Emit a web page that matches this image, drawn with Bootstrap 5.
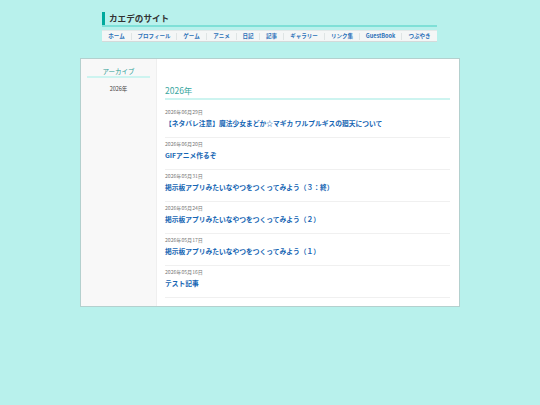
<!DOCTYPE html>
<html lang="ja">
<head>
<meta charset="utf-8">
<title>カエデのサイト</title>
<link href="https://cdn.jsdelivr.net/npm/bootstrap@5.3.0/dist/css/bootstrap.min.css" rel="stylesheet">
<style>
html,body{height:405px;overflow:hidden}
body{background:#b8f1ec;font-family:"Noto Sans CJK JP","Noto Sans",sans-serif;font-size:6px;color:#333}
.site-wrap{width:380px;margin:0 auto;padding-top:12px}
.site-head{width:335px;margin:0 0 0 22px}
.site-title{margin:0;font-size:8.6px;font-weight:700;line-height:13px;color:#333;border-left:3px solid #00a99d;padding-left:4px}
.title-rule{height:2px;background:#7ee0d7}
.site-nav{margin-top:3px;height:12px;background:#f4f6f6;border-top:1px solid #e2e8e8;border-bottom:1px solid #d4dada;align-items:center}
.site-nav a{display:block;flex:0 0 auto;text-align:center;font-size:5.5px;line-height:7px;font-weight:700;color:#2a70b8;text-decoration:none;border-right:1px solid #dfe4e4}
.site-nav a:last-child{border-right:0}
.w1{width:30px}.w2{width:45px}.w3{width:30px}.w4{width:30px}.w5{width:23px}.w6{width:24px}.w7{width:41px}.w8{width:35px}.w9{width:42px}.w10{width:35px}
.main-box{margin-top:16px;height:249px;background:#fff;border:1px solid #b4d0ce}
.side-col{width:76px;background:#f8f8f8;border-right:1px solid #efefef;padding:8px 6px 0}
.side-head{font-size:6.5px;line-height:9px;text-align:center;color:#2b9c94;border-bottom:2px solid #cdf4f0;margin-bottom:7px}
.side-item{font-size:5.5px;line-height:8px;text-align:center;color:#444}
.body-col{padding:24.5px 9px 0 8px}
.year-head{margin:0 0 6.5px;font-size:8.5px;font-weight:400;line-height:12px;color:#3aa79f;border-bottom:2px solid #cdf4f0;padding-bottom:2px}
.post-item{height:32px;border-bottom:1px solid #f0f0f0;padding-top:2px}
.post-date{font-size:5.1px;line-height:7px;color:#777}
.post-link{display:block;font-size:6.75px;line-height:10px;margin-top:3px;font-weight:700;color:#1565b3;text-decoration:none;white-space:nowrap}
</style>
</head>
<body>
<div class="site-wrap">
  <header class="site-head">
    <h1 class="site-title">カエデのサイト</h1>
    <div class="title-rule"></div>
    <nav class="site-nav d-flex">
      <a class="w1" href="#">ホーム</a><a class="w2" href="#">プロフィール</a><a class="w3" href="#">ゲーム</a><a class="w4" href="#">アニメ</a><a class="w5" href="#">日記</a><a class="w6" href="#">記事</a><a class="w7" href="#">ギャラリー</a><a class="w8" href="#">リンク集</a><a class="w9" href="#">GuestBook</a><a class="w10" href="#">つぶやき</a>
    </nav>
  </header>
  <div class="main-box d-flex">
    <aside class="side-col flex-shrink-0">
      <div class="side-head">アーカイブ</div>
      <div class="side-item">2026年</div>
    </aside>
    <main class="body-col flex-grow-1">
      <h2 class="year-head">2026年</h2>
      <div class="post-item"><div class="post-date">2026年06月29日</div><a class="post-link" href="#">【ネタバレ注意】魔法少女まどか☆マギカ ワルプルギスの廻天について</a></div>
      <div class="post-item"><div class="post-date">2026年06月20日</div><a class="post-link" href="#">GIFアニメ作るぞ</a></div>
      <div class="post-item"><div class="post-date">2026年05月31日</div><a class="post-link" href="#">掲示板アプリみたいなやつをつくってみよう（３：終）</a></div>
      <div class="post-item"><div class="post-date">2026年05月24日</div><a class="post-link" href="#">掲示板アプリみたいなやつをつくってみよう（２）</a></div>
      <div class="post-item"><div class="post-date">2026年05月17日</div><a class="post-link" href="#">掲示板アプリみたいなやつをつくってみよう（１）</a></div>
      <div class="post-item"><div class="post-date">2026年05月16日</div><a class="post-link" href="#">テスト記事</a></div>
    </main>
  </div>
</div>
<script src="https://cdn.jsdelivr.net/npm/bootstrap@5.3.0/dist/js/bootstrap.bundle.min.js"></script>
</body>
</html>
